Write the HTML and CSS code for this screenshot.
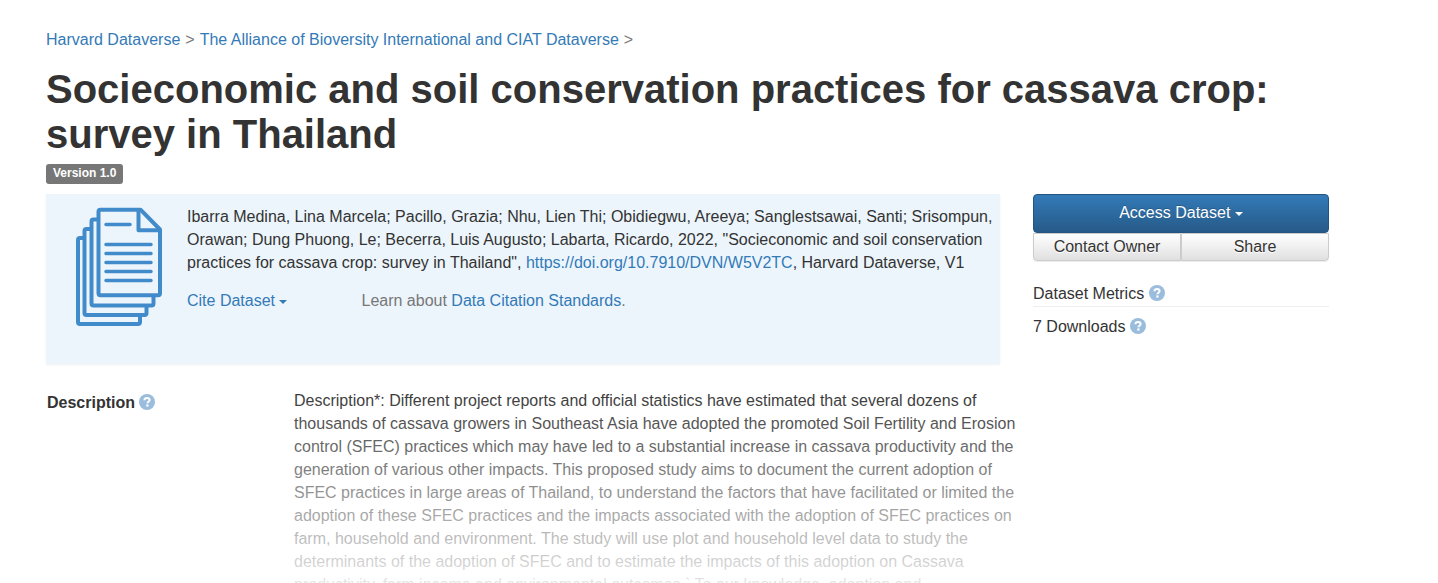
FILE: index.html
```html
<!DOCTYPE html>
<html lang="en">
<head>
    <meta charset="utf-8">
    <meta name="viewport" content="width=device-width, initial-scale=1">
    <title>Socieconomic and soil conservation practices for cassava crop: survey in Thailand</title>
    <link rel="stylesheet" href="styles.css">
</head>
<body>
    <svg class="sprite" aria-hidden="true">
        <symbol id="help" viewBox="0 0 16 16">
            <circle cx="8" cy="8" r="8" fill="#9abddd"/>
            <path d="M5.4 6.2C5.5 4.7 6.5 3.9 8 3.9s2.6.8 2.6 2.1c0 1.7-2.2 1.8-2.2 3.300" fill="none" stroke="#fff" stroke-width="2"/>
            <rect x="7.3" y="10.4" width="2.2" height="2.2" fill="#fff"/>
        </symbol>
    </svg>

    <div class="container">
        <nav class="breadcrumbs">
            <a href="#">Harvard Dataverse</a>
            <span>&gt;</span>
            <a href="#">The Alliance of Bioversity International and CIAT Dataverse</a>
            <span>&gt;</span>
        </nav>

        <h1 class="title">Socieconomic and soil conservation practices for cassava crop: survey in Thailand</h1>
        <span class="label">Version 1.0</span>

        <div class="top">
            <div class="citation">
                <svg class="dataset-icon" viewBox="0 0 87 120" aria-hidden="true">
                    <g fill="none" stroke="#428bca" stroke-width="4" stroke-linejoin="round">
                        <path d="M8.3 31H4q-2 0-2 2v82q0 2 2 2h58q2 0 2-2v-7"/>
                        <path d="M15.3 22H10.5q-2 0-2 2v82q0 2 2 2h58q2 0 2-2v-7"/>
                        <path d="M22.5 12.5H17.5q-2 0-2 2v82q0 2 2 2h58q2 0 2-2v-7"/>
                        <path d="M64.5 2.7H24.5q-2 0-2 2v81.6q0 2 2 2h57.5q2 0 2-2V22.5z"/>
                        <path d="M62.5 2.7V23.3H84"/>
                    </g>
                    <path d="M30 17.5H54M30 37.5H75M30 46.5H75M30 55.5H75M30 64.5H75M30 73.5H75" stroke="#428bca" stroke-width="3.5" stroke-linecap="round"/>
                </svg>
                <div class="citation-body">
                    <p class="citation-text">Ibarra Medina, Lina Marcela; Pacillo, Grazia; Nhu, Lien Thi; Obidiegwu, Areeya; Sanglestsawai, Santi; Srisompun, Orawan; Dung Phuong, Le; Becerra, Luis Augusto; Labarta, Ricardo, 2022, "Socieconomic and soil conservation practices for cassava crop: survey in Thailand", <a href="#">https://doi.org/10.7910/DVN/W5V2TC</a>, Harvard Dataverse, V1</p>
                    <div class="citation-links">
                        <button type="button" class="btn-link">Cite Dataset <span class="caret"></span></button>
                        <span class="learn">Learn about <a href="#">Data Citation Standards</a>.</span>
                    </div>
                </div>
            </div>

            <aside class="sidebar">
                <button type="button" class="btn btn-primary">Access Dataset <span class="caret"></span></button>
                <div class="btn-group">
                    <button type="button" class="btn btn-default">Contact Owner</button>
                    <button type="button" class="btn btn-default">Share</button>
                </div>
                <div class="metrics-title">Dataset Metrics <svg class="help"><use href="#help"/></svg></div>
                <div class="metrics-count">7 Downloads <svg class="help"><use href="#help"/></svg></div>
            </aside>
        </div>

        <dl class="metadata">
            <dt>Description <svg class="help"><use href="#help"/></svg></dt>
            <dd>Description*: Different project reports and official statistics have estimated that several dozens of thousands of cassava growers in Southeast Asia have adopted the promoted Soil Fertility and Erosion control (SFEC) practices which may have led to a substantial increase in cassava productivity and the generation of various other impacts. This proposed study aims to document the current adoption of SFEC practices in large areas of Thailand, to understand the factors that have facilitated or limited the adoption of these SFEC practices and the impacts associated with the adoption of SFEC practices on farm, household and environment. The study will use plot and household level data to study the determinants of the adoption of SFEC and to estimate the impacts of this adoption on Cassava productivity, farm income and environmental outcomes.` To our knowledge, adoption and</dd>
        </dl>
    </div>
</body>
</html>
```
FILE: styles.css
```css
* {
    box-sizing: border-box;
}

body {
    margin: 0;
    height: 100vh;
    overflow: hidden;
    background: #fff;
    color: #333;
    font-family: "Liberation Sans", Arial, sans-serif;
    font-size: 16px;
    line-height: 23px;
}

a {
    color: #337ab7;
    text-decoration: none;
}

button {
    font: inherit;
    cursor: pointer;
}

.sprite {
    display: none;
}

.container {
    padding: 28px 109px 0 46px;
}

.breadcrumbs {
    display: flex;
    gap: 5px;
    color: #777;
}

.title {
    margin: 16px 0 7px;
    font-size: 40px;
    line-height: 45px;
}

.label {
    display: block;
    width: fit-content;
    padding: 0 7px 2px;
    border-radius: 3px;
    background: #777;
    color: #fff;
    font-size: 12px;
    font-weight: bold;
    line-height: 18px;
}

.top {
    display: grid;
    grid-template-columns: minmax(0, 1fr) 296px;
    gap: 33px;
    align-items: start;
    margin-top: 10px;
}

.citation {
    display: flex;
    gap: 24px;
    min-height: 170px;
    padding: 11px 4px 11px 30px;
    background: #ecf5fc;
    box-shadow: 0 1px 2px rgba(0, 0, 0, 0.06);
}

.dataset-icon {
    flex: none;
    width: 87px;
    height: 120px;
    margin-top: 2px;
}

.citation-text {
    margin: 0 0 15px;
}

.citation-links {
    display: flex;
    gap: 74px;
}

.btn-link {
    padding: 0;
    border: 0;
    background: none;
    color: #337ab7;
}

.learn {
    color: #777;
}

.caret {
    display: inline-block;
    vertical-align: middle;
    border-top: 4px solid;
    border-left: 4px solid transparent;
    border-right: 4px solid transparent;
}

.btn {
    padding: 0 0 2px;
    border: 1px solid #ccc;
    border-radius: 4px;
}

.btn-primary {
    width: 100%;
    height: 39px;
    border-color: #245580;
    background: linear-gradient(#337ab7, #265a88);
    color: #fff;
    text-shadow: 0 -1px 0 rgba(0, 0, 0, 0.2);
}

.btn-group {
    display: flex;
}

.btn-default {
    flex: 1;
    height: 28px;
    background: linear-gradient(#fff, #e0e0e0);
    color: #333;
    text-shadow: 0 1px 0 #fff;
    box-shadow: 0 1px 1px rgba(0, 0, 0, 0.08);
}

.btn-default:first-child {
    border-radius: 0 0 0 4px;
}

.btn-default:last-child {
    border-radius: 0 0 4px 0;
}

.help {
    width: 16px;
    height: 16px;
    vertical-align: -2px;
}

.metrics-title {
    margin-top: 21px;
    padding-bottom: 1px;
    border-bottom: 1px solid #eee;
}

.metrics-count {
    margin-top: 8px;
}

.metadata {
    display: grid;
    grid-template-columns: 248px minmax(0, 726px);
    margin: 22px 0 0;
}

.metadata dt {
    padding: 5px 0 0 1px;
    font-weight: bold;
}

.metadata dd {
    position: relative;
    height: 226px;
    margin: 0;
    padding-top: 3px;
    overflow: hidden;
}

/* long descriptions fade out towards the bottom */
.metadata dd::after {
    content: '';
    position: absolute;
    inset: 0;
    background: linear-gradient(rgba(255, 255, 255, 0), #fff);
}
```
